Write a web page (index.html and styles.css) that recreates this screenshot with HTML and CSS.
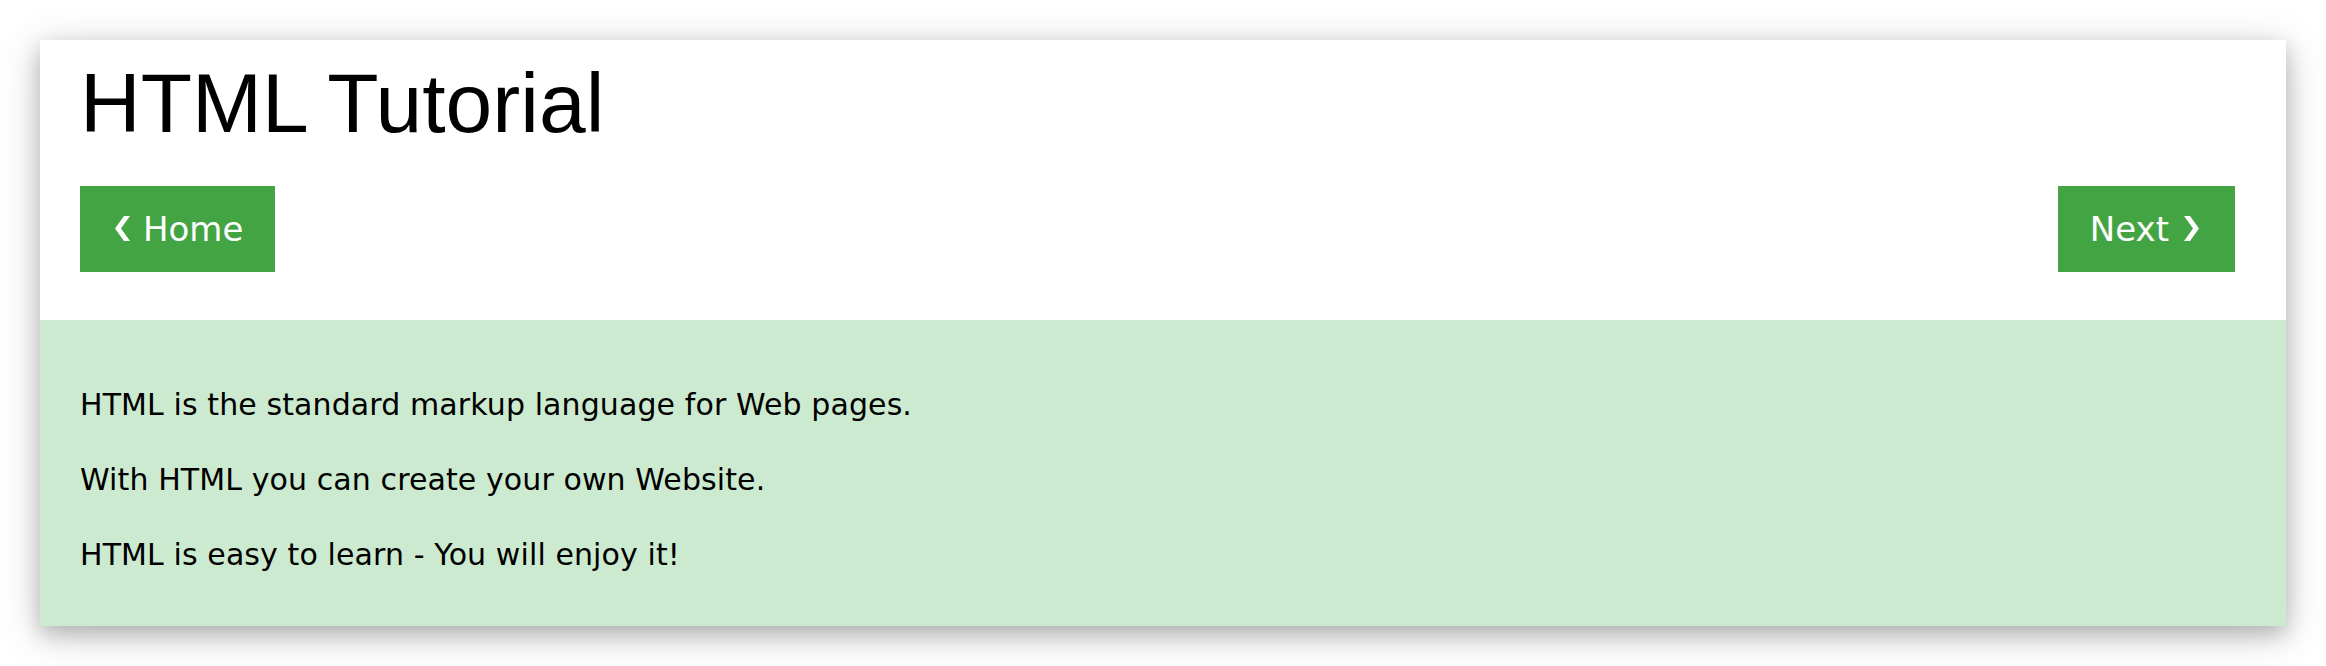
FILE: index.html
```html
<!DOCTYPE html>
<html lang="en">
<head>
<meta charset="utf-8">
<title>HTML Tutorial</title>
<link rel="stylesheet" href="styles.css">
</head>
<body>
  <div class="card">
    <header class="card-head">
      <h1 class="title">HTML Tutorial</h1>
      <nav class="nav">
        <a class="btn" href="#"><svg class="chev chev-left" viewBox="0 0 15 25" width="15" height="25" aria-hidden="true"><polygon points="15,0 9,0 0,12.5 9,25 15,25 6,12.5"/></svg>Home</a>
        <a class="btn" href="#">Next<svg class="chev chev-right" viewBox="0 0 15 25" width="15" height="25" aria-hidden="true"><polygon points="0,0 6,0 15,12.5 6,25 0,25 9,12.5"/></svg></a>
      </nav>
    </header>
    <section class="card-body">
      <p class="text">HTML is the standard markup language for Web pages.</p>
      <p class="text">With HTML you can create your own Website.</p>
      <p class="text">HTML is easy to learn - You will enjoy it!</p>
    </section>
  </div>
</body>
</html>
```

FILE: styles.css
```css
* {
  box-sizing: border-box;
}

html, body {
  margin: 0;
  background: #ffffff;
}

body {
  padding: 40px;
  font-family: Verdana, "DejaVu Sans", sans-serif;
  color: #000000;
}

.card {
  background: #ffffff;
  box-shadow: 0 8px 20px 0 rgba(0, 0, 0, 0.2), 0 8px 40px 0 rgba(0, 0, 0, 0.19);
}

.card-head {
  padding: 15px 51px 48px 40px;
  display: flex;
  flex-direction: column;
  gap: 35px;
}

.title {
  margin: 0;
  font-family: Arial, "Liberation Sans", sans-serif;
  font-weight: normal;
  font-size: 84px;
  line-height: 96px;
  color: #000000;
}

.nav {
  display: flex;
  justify-content: space-between;
  align-items: center;
}

.btn {
  display: inline-block;
  background: #43a443;
  color: #ffffff;
  text-decoration: none;
  font-family: Verdana, "DejaVu Sans", sans-serif;
  font-size: 34px;
  line-height: 52px;
  padding: 17px 32px;
  white-space: nowrap;
}

.chev {
  display: inline-block;
  vertical-align: baseline;
  fill: #ffffff;
}

.chev-left {
  margin: 0 13px 0 3px;
}

.chev-right {
  margin: 0 4px 0 15px;
}

.card-body {
  background: #cceacf;
  padding: 62px 40px 49px 40px;
  display: flex;
  flex-direction: column;
  gap: 30px;
}

.text {
  margin: 0;
  font-size: 30px;
  line-height: 45px;
  letter-spacing: 0.1px;
}
```
